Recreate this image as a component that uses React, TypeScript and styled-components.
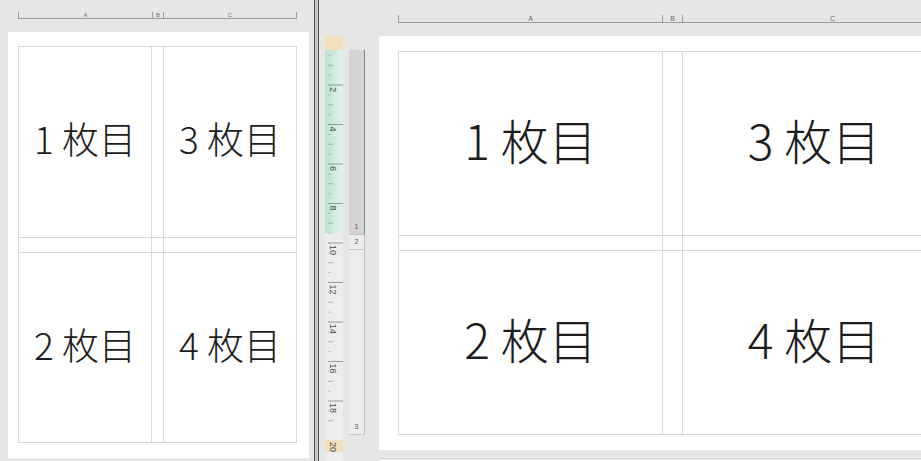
import React from "react";
import styled, { createGlobalStyle } from "styled-components";

const Global = createGlobalStyle`
  html, body { margin: 0; padding: 0; background: #e6e6e6; overflow: hidden; }
  * { box-sizing: border-box; }
`;

const Root = styled.div`
  display: flex;
  width: 921px;
  height: 461px;
  overflow: hidden;
  background: #e6e6e6;
  font-family: "Noto Sans CJK JP", "Noto Sans", sans-serif;
`;

const LeftPane = styled.div`
  flex: none;
  width: 314px;
  display: flex;
  flex-direction: column;
  background: #e6e6e6;
`;

const ColHeader = styled.div<{ $h: number; $pl: number; $pt: number }>`
  flex: none;
  height: ${(p) => p.$h}px;
  padding-left: ${(p) => p.$pl}px;
  padding-top: ${(p) => p.$pt}px;
  display: flex;
  align-items: flex-start;
`;

const RulerSeg = styled.div<{ $w: number; $end?: boolean; $fs: number; $hh: number }>`
  flex: none;
  width: ${(p) => p.$w}px;
  height: ${(p) => p.$hh}px;
  border-left: 1px solid #9c9c9c;
  border-bottom: 1px solid #9c9c9c;
  border-right: ${(p) => (p.$end ? "1px solid #9c9c9c" : "none")};
  font-family: "Liberation Sans", Arial, sans-serif;
  font-size: ${(p) => p.$fs}px;
  line-height: ${(p) => p.$hh - 1}px;
  color: #6a6a6a;
  text-align: center;
`;

const Page = styled.div<{ $pl: number; $pt: number; $w: number; $h: number; $ml: number }>`
  flex: none;
  margin-left: ${(p) => p.$ml}px;
  width: ${(p) => p.$w}px;
  height: ${(p) => p.$h}px;
  background: #ffffff;
  padding-left: ${(p) => p.$pl}px;
  padding-top: ${(p) => p.$pt}px;
  overflow: hidden;
`;

const SheetGrid = styled.div<{ $cols: string; $rows: string }>`
  display: grid;
  grid-template-columns: ${(p) => p.$cols};
  grid-template-rows: ${(p) => p.$rows};
  border-top: 1px solid #d8d8d8;
  border-left: 1px solid #d8d8d8;
  width: max-content;
`;

const Cell = styled.div<{ $fs: number; $pb: number }>`
  border-right: 1px solid #d8d8d8;
  border-bottom: 1px solid #d8d8d8;
  display: flex;
  align-items: center;
  justify-content: center;
  font-size: ${(p) => p.$fs}px;
  font-weight: 300;
  color: #1c1c1c;
  white-space: pre;
  padding-bottom: ${(p) => p.$pb}px;
`;

const Divider = styled.div`
  flex: none;
  width: 5px;
  height: 100%;
  border-left: 1px solid #4e4e4e;
  border-right: 1px solid #4e4e4e;
  background: #c9c9c9;
`;

const RightPane = styled.div`
  flex: 1;
  min-width: 0;
  display: flex;
  flex-direction: column;
  overflow: hidden;
  background: #e6e6e6;
`;

const RightBody = styled.div`
  flex: none;
  display: flex;
  align-items: flex-start;
  padding-left: 6px;
`;

const VRuler = styled.svg`
  flex: none;
  display: block;
`;

const RowHeadCol = styled.div`
  flex: none;
  margin-left: 6px;
  margin-top: 14px;
  width: 16px;
  display: flex;
  flex-direction: column;
`;

const RowHead = styled.div<{ $h: number; $sel?: boolean }>`
  height: ${(p) => p.$h}px;
  background: ${(p) => (p.$sel ? "#d3d3d3" : "#ececec")};
  border-right: 1px solid ${(p) => (p.$sel ? "#6f8f7e" : "#bdbdbd")};
  border-bottom: 1px solid #c8c8c8;
  display: flex;
  align-items: flex-end;
  justify-content: center;
  font-family: "Liberation Sans", Arial, sans-serif;
  font-size: 7px;
  line-height: 10px;
  color: #555;
  padding-bottom: 2px;
`;

const RightPageCol = styled.div`
  flex: none;
  margin-left: 14px;
  display: flex;
  flex-direction: column;
`;

const NextPage = styled.div`
  margin-top: 8px;
  height: 12px;
  background: #f3f3f3;
  border-top: 1px solid #d4d4d4;
`;

const labels = ["1 枚目", "3 枚目", "2 枚目", "4 枚目"];

function Sheet({ cols, rows, fs, pb }: { cols: string; rows: string; fs: number; pb: number }) {
  const cells = [labels[0], "", labels[1], "", "", "", labels[2], "", labels[3]];
  return (
    <SheetGrid $cols={cols} $rows={rows}>
      {cells.map((t, i) => (
        <Cell key={i} $fs={fs} $pb={pb}>
          {t}
        </Cell>
      ))}
    </SheetGrid>
  );
}

function VerticalRuler() {
  const unit = 19.75;
  const base = 49;
  const ticks: React.ReactNode[] = [];
  for (let q = -2; q <= 38; q++) {
    const y = base + (q - 4) * (unit / 2);
    if (y < 14 || y > 404) continue;
    const cm = q / 2;
    if (q % 4 === 0) {
      ticks.push(<line key={"t" + q} x1={3} x2={18} y1={y} y2={y} stroke="#8e8e8e" strokeWidth={0.9} />);
      ticks.push(
        <text
          key={"l" + q}
          x={0}
          y={0}
          transform={`translate(4.5 ${y + 2}) rotate(90)`}
          fontSize={9}
          fill="#4a4a4a"
          fontFamily="Liberation Sans, Arial, sans-serif"
        >
          {cm}
        </text>
      );
    } else if (q % 2 === 0) {
      ticks.push(<line key={"t" + q} x1={3} x2={8} y1={y} y2={y} stroke="#a0a0a0" strokeWidth={0.8} />);
    } else {
      ticks.push(<line key={"t" + q} x1={3} x2={6} y1={y} y2={y} stroke="#b0b0b0" strokeWidth={0.7} />);
    }
  }
  return (
    <VRuler width={18} height={425} viewBox="0 0 18 425">
      <defs>
        <linearGradient id="g" x1="0" x2="1" y1="0" y2="0">
          <stop offset="0" stopColor="#b9e3cd" />
          <stop offset="1" stopColor="#e3f4ea" />
        </linearGradient>
      </defs>
      <rect x={0} y={0} width={18} height={425} fill="#ededed" />
      <rect x={0} y={0} width={18} height={14} fill="#f1e0bb" />
      <rect x={0} y={14} width={18} height={183} fill="url(#g)" />
      <rect x={0} y={404} width={18} height={12} fill="#f1e0bb" />
      {ticks}
      <text
        x={0}
        y={0}
        transform={`translate(4.5 406) rotate(90)`}
        fontSize={9}
        fill="#4a4a4a"
        fontFamily="Liberation Sans, Arial, sans-serif"
      >
        20
      </text>
    </VRuler>
  );
}

export default function App() {
  return (
    <Root>
      <Global />
      <LeftPane>
        <ColHeader $h={32} $pl={18} $pt={12}>
          <RulerSeg $w={134} $fs={6} $hh={7}>A</RulerSeg>
          <RulerSeg $w={11} $fs={6} $hh={7}>B</RulerSeg>
          <RulerSeg $w={134} $fs={6} $hh={7} $end>C</RulerSeg>
        </ColHeader>
        <Page $ml={8} $w={301} $h={426} $pl={10} $pt={14}>
          <Sheet cols="133px 12px 133px" rows="191px 15px 190px" fs={37} pb={8} />
        </Page>
      </LeftPane>
      <Divider />
      <RightPane>
        <ColHeader $h={36} $pl={79} $pt={15}>
          <RulerSeg $w={264} $fs={7} $hh={8}>A</RulerSeg>
          <RulerSeg $w={20} $fs={7} $hh={8}>B</RulerSeg>
          <RulerSeg $w={300} $fs={7} $hh={8}>C</RulerSeg>
        </ColHeader>
        <RightBody>
          <VerticalRuler />
          <RowHeadCol>
            <RowHead $h={185} $sel>1</RowHead>
            <RowHead $h={15}>2</RowHead>
            <RowHead $h={185}>3</RowHead>
          </RowHeadCol>
          <RightPageCol>
            <Page $ml={0} $w={560} $h={414} $pl={19} $pt={15}>
              <Sheet cols="264px 20px 263px" rows="184px 15px 184px" fs={48} pb={10} />
            </Page>
            <NextPage />
          </RightPageCol>
        </RightBody>
      </RightPane>
    </Root>
  );
}
